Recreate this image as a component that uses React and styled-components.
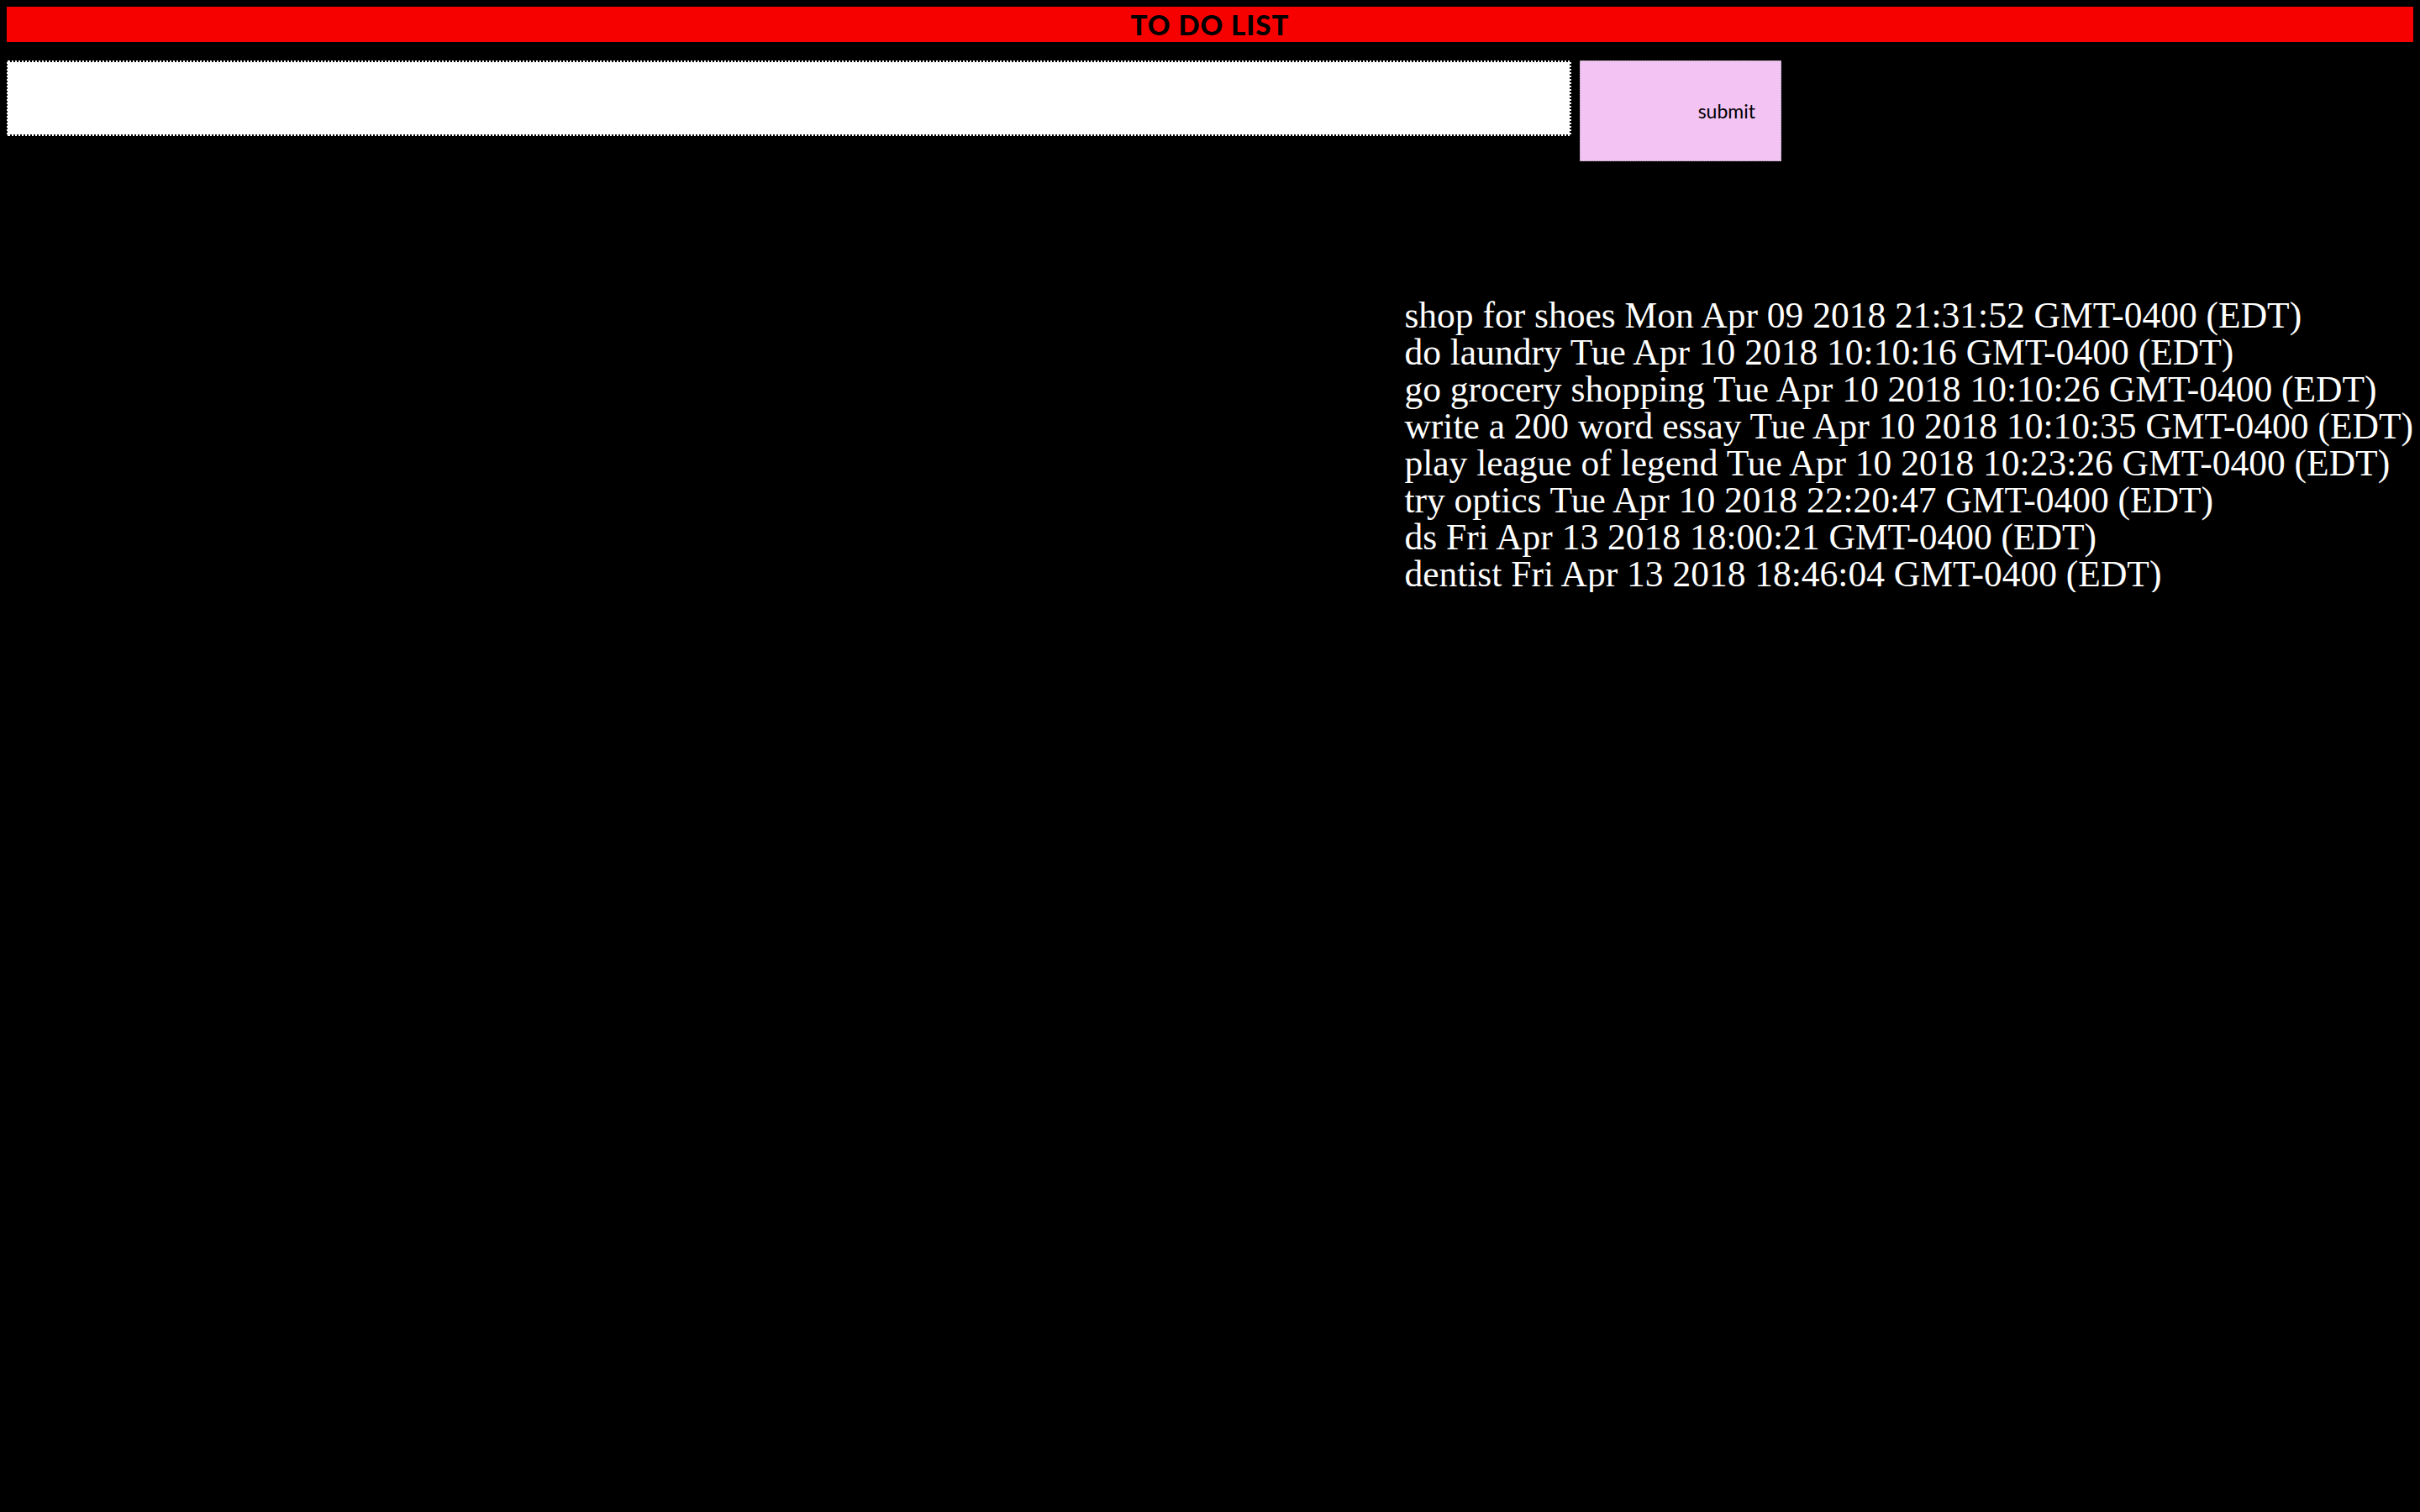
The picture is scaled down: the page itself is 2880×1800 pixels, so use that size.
import React from "react";
import styled, { createGlobalStyle } from "styled-components";

const GlobalStyle = createGlobalStyle`
  html, body {
    background: #000;
  }
  body {
    margin: 8px;
  }
`;

const todos = [
  "shop for shoes Mon Apr 09 2018 21:31:52 GMT-0400 (EDT)",
  "do laundry Tue Apr 10 2018 10:10:16 GMT-0400 (EDT)",
  "go grocery shopping Tue Apr 10 2018 10:10:26 GMT-0400 (EDT)",
  "write a 200 word essay Tue Apr 10 2018 10:10:35 GMT-0400 (EDT)",
  "play league of legend Tue Apr 10 2018 10:23:26 GMT-0400 (EDT)",
  "try optics Tue Apr 10 2018 22:20:47 GMT-0400 (EDT)",
  "ds Fri Apr 13 2018 18:00:21 GMT-0400 (EDT)",
  "dentist Fri Apr 13 2018 18:46:04 GMT-0400 (EDT)",
];

const App = () => {
  return (
    <>
      <GlobalStyle />
      <Page>
        <Title>TO DO LIST</Title>
        <Form onSubmit={(e) => e.preventDefault()}>
          <TaskInput type="text" />
          <SubmitButton type="submit">submit</SubmitButton>
        </Form>
        <ListRow>
          <TodoList>
            {todos.map((t) => (
              <TodoItem key={t}>{t}</TodoItem>
            ))}
          </TodoList>
        </ListRow>
      </Page>
    </>
  );
};

const Page = styled.div`
  display: flex;
  flex-direction: column;
`;

const Title = styled.h1`
  margin: 0;
  height: 42px;
  background: #f70000;
  color: #000;
  font-family: Lato, "DejaVu Sans", sans-serif;
  font-weight: 900;
  font-size: 33px;
  letter-spacing: 1px;
  line-height: 42px;
  text-align: center;
`;

const Form = styled.form`
  display: flex;
  align-items: flex-start;
  gap: 10px;
  margin-top: 22px;
`;

const TaskInput = styled.input`
  box-sizing: border-box;
  width: 1863px;
  height: 90px;
  margin: 0 0 0 -1px;
  padding: 0 10px;
  background: #fff;
  border: 2px dotted #000;
  outline: none;
  font-family: "Liberation Sans", sans-serif;
  font-size: 30px;
`;

const SubmitButton = styled.button`
  box-sizing: border-box;
  width: 240px;
  height: 120px;
  padding: 0 30px 0 0;
  background: #f3c3f3;
  border: 1px dotted #a8a0a8;
  color: #000;
  font-family: Lato, "DejaVu Sans", sans-serif;
  font-size: 23px;
  text-align: right;
  cursor: pointer;
`;

const ListRow = styled.div`
  display: flex;
  justify-content: flex-end;
  margin-top: 161px;
`;

const TodoList = styled.div`
  display: flex;
  flex-direction: column;
`;

const TodoItem = styled.div`
  color: #fff;
  font-family: "Liberation Serif", "DejaVu Serif", serif;
  font-size: 43.5px;
  line-height: 44px;
  white-space: nowrap;
`;

export default App;
